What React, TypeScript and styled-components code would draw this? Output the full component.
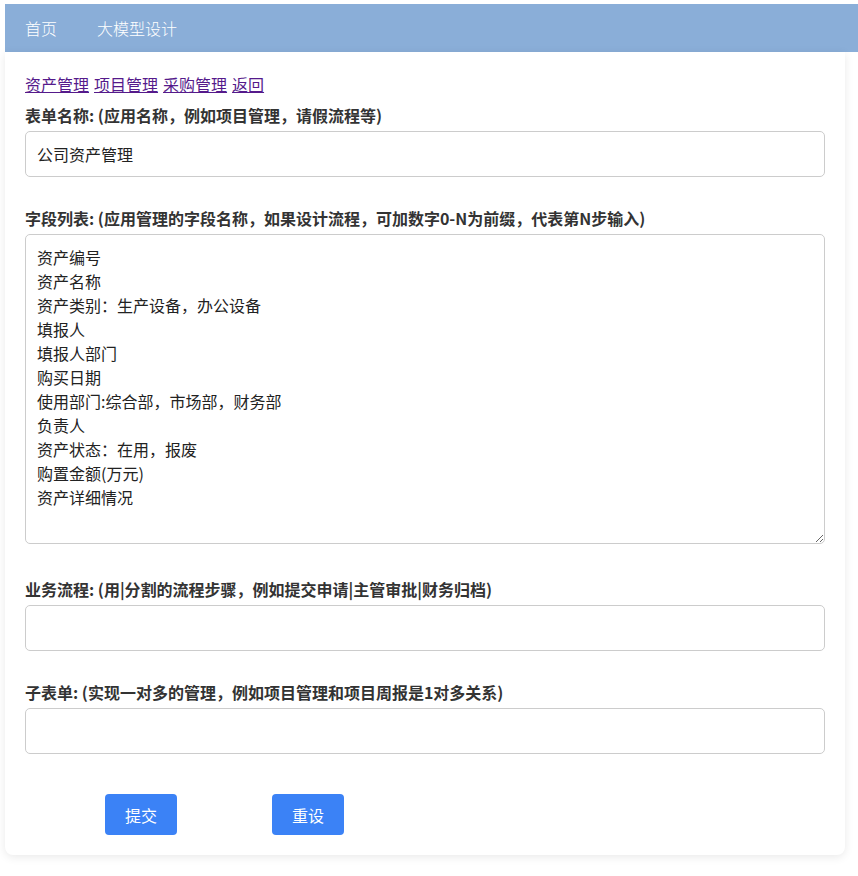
import styled, { createGlobalStyle } from 'styled-components';

const GlobalStyle = createGlobalStyle`
    html, body {
        margin: 0;
        padding: 0;
        background: #ffffff;
        font-family: "Noto Sans CJK SC", "Noto Sans", "Liberation Sans", sans-serif;
        color: #333333;
    }
`;

const fields = [
    '资产编号',
    '资产名称',
    '资产类别：生产设备，办公设备',
    '填报人',
    '填报人部门',
    '购买日期',
    '使用部门:综合部，市场部，财务部',
    '负责人',
    '资产状态：在用，报废',
    '购置金额(万元)',
    '资产详细情况',
].join('\n');

const links = ['资产管理', '项目管理', '采购管理', '返回'];

export default function App() {
    return (
        <Page>
            <GlobalStyle />
            <TopBar>
                <NavItem>首页</NavItem>
                <NavItem>大模型设计</NavItem>
            </TopBar>
            <Card>
                <LinkRow>
                    {links.map((l) => (
                        <a key={l} href="#">{l}</a>
                    ))}
                </LinkRow>
                <FormGroup>
                    <Label>表单名称: (应用名称，例如项目管理，请假流程等)</Label>
                    <TextInput type='text' defaultValue='公司资产管理' />
                </FormGroup>
                <FormGroup>
                    <Label>字段列表: (应用管理的字段名称，如果设计流程，可加数字0-N为前缀，代表第N步输入)</Label>
                    <TextArea defaultValue={fields} />
                </FormGroup>
                <FormGroup>
                    <Label>业务流程: (用|分割的流程步骤，例如提交申请|主管审批|财务归档)</Label>
                    <TextInput type='text' />
                </FormGroup>
                <FormGroup>
                    <Label>子表单: (实现一对多的管理，例如项目管理和项目周报是1对多关系)</Label>
                    <TextInput type='text' />
                </FormGroup>
                <ButtonRow>
                    <ActionButton>提交</ActionButton>
                    <ActionButton>重设</ActionButton>
                </ButtonRow>
            </Card>
        </Page>
    );
}

const Page = styled.div`
    padding: 4px 0 20px 5px;
`;

const TopBar = styled.div`
    display: flex;
    align-items: center;
    height: 48px;
    background: #8aaed8;
`;

const NavItem = styled.span`
    padding: 0 20px;
    color: #ffffff;
    font-size: 16px;
    font-weight: 300;
    line-height: 48px;
    margin-top: -1px;
`;

const Card = styled.div`
    width: 840px;
    box-sizing: border-box;
    padding: 20px 20px 20px;
    background: #ffffff;
    border-radius: 0 0 8px 8px;
    box-shadow: 0 2px 10px rgba(0, 0, 0, 0.09);
`;

const LinkRow = styled.div`
    display: flex;
    gap: 5px;
    font-size: 16px;
    line-height: 24px;
    margin-bottom: 8px;

    a {
        color: #551a8b;
        text-decoration: underline;
    }
`;

const FormGroup = styled.div`
    display: flex;
    flex-direction: column;
    margin-bottom: 30px;
`;

const Label = styled.label`
    font-size: 16px;
    font-weight: bold;
    line-height: 22px;
    color: #333333;
    margin-bottom: 5px;
`;

const TextInput = styled.input`
    box-sizing: border-box;
    width: 100%;
    height: 46px;
    padding: 0 11px;
    border: 1px solid #cccccc;
    border-radius: 5px;
    font-family: inherit;
    font-size: 16px;
    color: #222222;
    outline: none;
`;

const TextArea = styled.textarea`
    box-sizing: border-box;
    width: 100%;
    height: 310px;
    padding: 10px 11px;
    border: 1px solid #cccccc;
    border-radius: 5px;
    font-family: inherit;
    font-size: 16px;
    line-height: 24px;
    color: #222222;
    outline: none;
    margin-bottom: 4px;
`;

const ButtonRow = styled.div`
    display: flex;
    gap: 95px;
    padding-left: 80px;
    margin-top: 40px;
`;

const ActionButton = styled.button`
    width: 72px;
    height: 41px;
    border: none;
    border-radius: 4px;
    background: #3b82f6;
    color: #ffffff;
    font-family: inherit;
    font-size: 16px;
    cursor: pointer;
`;
